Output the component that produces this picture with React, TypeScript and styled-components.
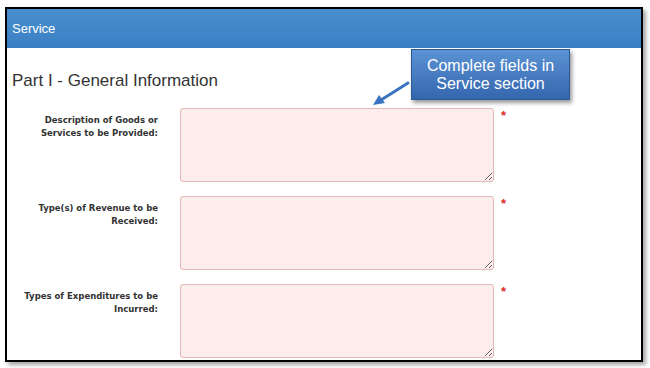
import React from 'react';
import styled, { createGlobalStyle } from 'styled-components';

const GlobalStyle = createGlobalStyle`
  html, body {
    margin: 0;
    padding: 0;
    background: #ffffff;
  }
  body {
    font-family: 'Liberation Sans', Arial, sans-serif;
  }
`;

const fields = [
  { label: ['Description of Goods or', 'Services to be Provided:'] },
  { label: ['Type(s) of Revenue to be', 'Received:'] },
  { label: ['Types of Expenditures to be', 'Incurred:'] },
];

function App() {
  return (
    <>
      <GlobalStyle />
      <Page>
        <Frame>
          <Header>Service</Header>
          <Body>
            <Title>Part I - General Information</Title>
            {fields.map((f, i) => (
              <Row key={i}>
                <Label>
                  {f.label[0]}
                  <br />
                  {f.label[1]}
                </Label>
                <Field />
                <Required>*</Required>
              </Row>
            ))}
          </Body>
          <Callout>
            Complete fields in
            <br />
            Service section
          </Callout>
          <Arrow width='40' height='28' viewBox='0 0 40 28'>
            <line x1='37' y1='3' x2='10' y2='20' stroke='#3b74c0' strokeWidth='3' strokeLinecap='round' />
            <polygon points='2,25 8,15 14,23' fill='#3b74c0' />
          </Arrow>
        </Frame>
      </Page>
    </>
  );
}

const Page = styled.div`
  width: 650px;
  height: 368px;
  padding: 7px 0 0 5px;
  box-sizing: border-box;
  overflow: hidden;
`;

const Frame = styled.div`
  position: relative;
  width: 638px;
  height: 355px;
  box-sizing: border-box;
  border: 2px solid #000;
  background: #fff;
  box-shadow: 3px 3px 4px rgba(0, 0, 0, 0.35);
  overflow: hidden;
`;

const Header = styled.div`
  height: 39px;
  display: flex;
  align-items: center;
  padding-left: 5px;
  background: linear-gradient(#4a90d0, #3a7fc2);
  color: #fff;
  font-size: 13px;
`;

const Body = styled.div`
  padding: 0 0 0 5px;
`;

const Title = styled.div`
  margin: 23px 0 17px;
  font-size: 17px;
  line-height: 20px;
  color: #333;
`;

const Row = styled.div`
  display: grid;
  grid-template-columns: 146px 314px auto;
  column-gap: 22px;
  align-items: start;
  margin-bottom: 14px;
`;

const Label = styled.div`
  padding-top: 6px;
  text-align: right;
  font-family: 'DejaVu Sans', Verdana, sans-serif;
  font-weight: bold;
  font-size: 8.5px;
  line-height: 13px;
  color: #333;
`;

const Field = styled.textarea`
  width: 314px;
  height: 74px;
  box-sizing: border-box;
  margin: 0;
  background: #fcecec;
  border: 1px solid #e6b9b9;
  border-radius: 3px;
  resize: vertical;
  outline: none;
`;

const Required = styled.span`
  margin-left: -15px;
  padding-top: 2px;
  color: #e02a2a;
  font-size: 13px;
  font-weight: bold;
  line-height: 12px;
`;

const Callout = styled.div`
  position: absolute;
  left: 404px;
  top: 40px;
  width: 159px;
  height: 51px;
  box-sizing: border-box;
  display: flex;
  align-items: center;
  justify-content: center;
  text-align: center;
  background: linear-gradient(#5b93d4, #3466ad);
  border: 1px solid #2c5894;
  box-shadow: 2px 3px 4px rgba(0, 0, 0, 0.4);
  color: #fff;
  font-size: 16px;
  line-height: 18px;
`;

const Arrow = styled.svg`
  position: absolute;
  left: 364px;
  top: 71px;
`;

export default App;
